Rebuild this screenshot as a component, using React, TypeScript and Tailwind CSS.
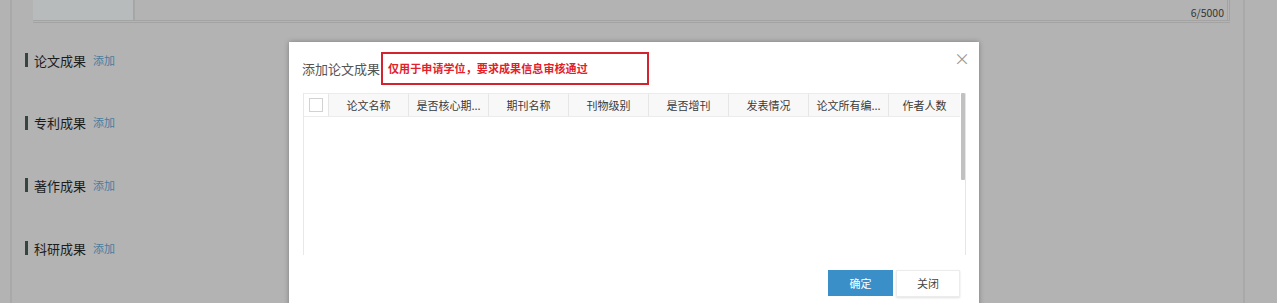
const sections = ['论文成果', '专利成果', '著作成果', '科研成果'];

const columns = ['论文名称', '是否核心期...', '期刊名称', '刊物级别', '是否增刊', '发表情况', '论文所有编...', '作者人数'];

function SectionTitle({ title }: { title: string }) {
  return (
    <div className="flex h-[16px] items-center">
      <span className="ml-[13px] h-[14px] w-[3px] bg-[#36463f]" />
      <span className="ml-[6px] text-[13px] leading-none text-[#1c1c1c]">{title}</span>
      <a className="ml-[7px] text-[11px] leading-none text-[#4a7c9e]">添加</a>
    </div>
  );
}

function PaperDialog() {
  return (
    <div className="absolute left-[289px] top-[42px] flex h-[290px] w-[690px] flex-col bg-white shadow-[0_0_5px_rgba(0,0,0,0.3)]">
      <div className="flex items-center pl-[13px] pt-[10px]">
        <span className="text-[13px] leading-none text-[#555]">添加论文成果</span>
        <div className="ml-[1px] flex h-[33px] w-[268px] items-center border-2 border-[#d3232f] pl-[5px]">
          <span className="text-[11px] font-bold leading-none tracking-[0.1px] text-[#e3202a]">仅用于申请学位，要求成果信息审核通过</span>
        </div>
      </div>
      <button className="absolute right-[9px] top-[8px] text-[16px] leading-none text-[#9a9a9a]">×</button>

      <div className="mx-[14px] mt-[8px] flex h-[162px] w-[663px] border-l border-[#e8e8e8]">
        <div className="flex flex-1 flex-col">
          <div className="flex h-[24px] items-center border-t border-b border-[#ececec] bg-[#f8f8f8] text-[11px] text-[#3a3a3a]">
            <div className="flex h-full w-[24px] items-center justify-center bg-white">
              <span className="h-[14px] w-[14px] border border-[#d2d2d2] bg-white" />
            </div>
            {columns.map((c, i) => (
              <div
                key={c}
                className={`flex h-full items-center justify-center border-l border-[#e6e6e6] ${i === columns.length - 1 ? 'flex-1' : 'w-[80px]'}`}
              >
                {c}
              </div>
            ))}
          </div>
        </div>
        <div className="flex w-[6px] flex-col border-r border-[#e6e6e6] bg-white">
          <div className="mx-auto h-[87px] w-[4px] rounded-[1px] bg-[#c1c1c1]" />
        </div>
      </div>

      <div className="mr-[19px] mt-[15px] flex justify-end">
        <button className="h-[26px] w-[65px] bg-[#3a8fc8] text-[11px] text-white">确定</button>
        <button className="ml-[3px] h-[27px] w-[64px] border border-[#ececec] bg-white text-[11px] text-[#444] shadow-[0_1px_2px_rgba(0,0,0,0.12)]">关闭</button>
      </div>
    </div>
  );
}

export default function App() {
  return (
    <div className="relative h-[303px] w-[1277px] overflow-hidden bg-[#b3b3b3] font-['Noto_Sans_CJK_SC','Liberation_Sans',sans-serif]">
      <div className="ml-[10px] flex h-full w-[1235px] flex-col border-x-2 border-[#a9a9a9]">
        <div className="ml-[21px] flex h-[23px] w-[1197px] border-b-[3px] border-double border-[#a3a3a3]">
          <div className="w-[102px] border-r-2 border-[#a6a6a6] bg-[#b8bbbb]" />
          <div className="flex flex-1 items-end justify-end border-r-[3px] border-double border-[#a3a3a3] pb-[2px] pr-[3px]">
            <span className="text-[10.5px] leading-none text-[#333]">6/5000</span>
          </div>
        </div>

        <div className="mt-[29px] flex flex-col gap-[46.7px]">
          {sections.map((s) => (
            <SectionTitle key={s} title={s} />
          ))}
        </div>
      </div>

      <PaperDialog />
    </div>
  );
}
